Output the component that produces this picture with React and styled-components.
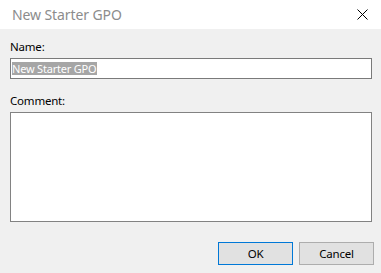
import React from "react";
import styled, { createGlobalStyle } from "styled-components";

const Global = createGlobalStyle`
  html, body { margin: 0; padding: 0; background: #f0f0f0; }
  * { box-sizing: border-box; }
`;

const Window = styled.div`
  width: 381px;
  height: 273px;
  background: #f0f0f0;
  display: flex;
  flex-direction: column;
  font-family: "Noto Sans", "Open Sans", sans-serif;
  overflow: hidden;
`;

const TitleBar = styled.div`
  height: 29px;
  flex: none;
  background: #ffffff;
  display: flex;
  align-items: center;
  justify-content: space-between;
  padding: 0 13px 0 12px;
`;

const Title = styled.span`
  font-size: 14px;
  color: #8c8c8c;
  letter-spacing: -0.1px;
  line-height: 20px;
`;

const Close = styled.svg`
  width: 11px;
  height: 11px;
  display: block;
`;

const Content = styled.div`
  display: flex;
  flex-direction: column;
  padding: 0 9px 0 10px;
`;

const Label = styled.div`
  font-size: 11.5px;
  line-height: 16px;
  color: #000;
  margin-top: ${(p) => p.$top}px;
  margin-bottom: 3px;
  letter-spacing: -0.2px;
`;

const Field = styled.div`
  height: 21px;
  background: #fff;
  border: 1px solid #7a7a7a;
  display: flex;
  align-items: center;
  padding-left: 1px;
`;

const Selected = styled.span`
  background: #a6a6a6;
  color: #fff;
  font-size: 11px;
  line-height: 13px;
  letter-spacing: -0.2px;
  padding: 0 1px 0 0;
`;

const TextArea = styled.div`
  height: 110px;
  background: #fff;
  border: 1px solid #828282;
`;

const Footer = styled.div`
  display: flex;
  justify-content: flex-end;
  gap: 6px;
  padding: 0 7px 0 0;
  margin-top: 20px;
`;

const Button = styled.button`
  width: 75px;
  height: 23px;
  background: #e1e1e1;
  border: 1px solid ${(p) => (p.$primary ? "#0078d7" : "#adadad")};
  font-family: "Noto Sans", "Open Sans", sans-serif;
  font-size: 11.5px;
  color: #000;
  padding: 0;
  letter-spacing: -0.2px;
`;

export default function App() {
  return (
    <>
      <Global />
      <Window>
        <TitleBar>
          <Title>New Starter GPO</Title>
          <Close viewBox="0 0 11 11">
            <path d="M0.5 0.5 L10.5 10.5 M10.5 0.5 L0.5 10.5" stroke="#000" strokeWidth="1" fill="none" />
          </Close>
        </TitleBar>
        <Content>
          <Label $top={10}>Name:</Label>
          <Field>
            <Selected>New Starter GPO</Selected>
          </Field>
          <Label $top={14}>Comment:</Label>
          <TextArea />
        </Content>
        <Footer>
          <Button $primary>OK</Button>
          <Button>Cancel</Button>
        </Footer>
      </Window>
    </>
  );
}
